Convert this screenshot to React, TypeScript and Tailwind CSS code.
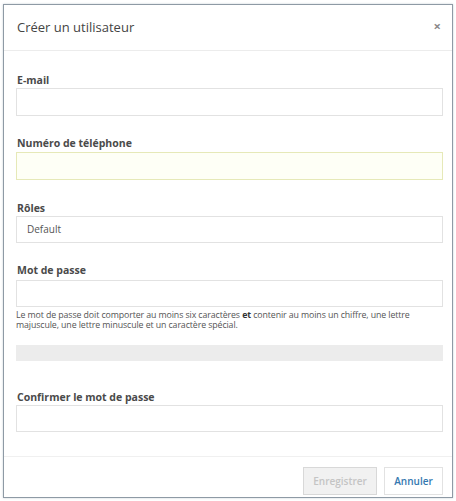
import React from "react";

const font = { fontFamily: '"Open Sans", "Noto Sans", sans-serif' };

function Label({ children, className = "" }: { children: React.ReactNode; className?: string }) {
  return (
    <div className={`text-[10.5px] leading-[14px] font-bold text-[#4a4a4a] ${className}`}>{children}</div>
  );
}

export default function App() {
  return (
    <div className="w-[456px] h-[501px] bg-white pt-[4px] pl-[3px] pr-[3px]" style={font}>
      <div className="h-[494px] border border-[#8e9aa5] flex flex-col bg-white shadow-[0_0_2px_rgba(120,140,160,0.4)]">
        <div className="h-[46px] shrink-0 border-b border-[#ececec] flex items-center justify-between pl-[13px] pr-[11px]">
          <div className="text-[13px] text-[#444] mt-[1px]">Créer un utilisateur</div>
          <div className="text-[13px] font-bold text-[#8a8a8a] leading-none -mt-[3px]">×</div>
        </div>
        <div className="flex-1 flex flex-col pl-[12px] pr-[9px] pt-[22px]">
          <Label className="pl-[1px]">E-mail</Label>
          <div className="mt-[1px] h-[28px] border border-[#e2e2e2] bg-white" />

          <Label className="mt-[20px] pl-[1px]">Numéro de téléphone</Label>
          <div className="mt-[2px] h-[28px] border border-[#e6e9b8] bg-[#fefff6]" />

          <Label className="mt-[21px] pl-[1px]">Rôles</Label>
          <div className="mt-[1px] h-[27px] border border-[#e2e2e2] bg-white flex items-center pl-[10px] text-[10px] text-[#555]">
            Default
          </div>

          <Label className="mt-[20px] pl-[1px]">Mot de passe</Label>
          <div className="mt-[3px] h-[27px] border border-[#e2e2e2] bg-white" />
          <div className="mt-[3px] text-[8.8px] leading-[10px] text-[#555] w-[408px] tracking-[-0.1px]">
            Le mot de passe doit comporter au moins six caractères <span className="font-bold text-[#333]">et</span> contenir au moins un chiffre, une lettre majuscule, une lettre minuscule et un caractère spécial.
          </div>
          <div className="mt-[15px] h-[16px] bg-[#ececec]" />

          <Label className="mt-[29px] pl-[1px]">Confirmer le mot de passe</Label>
          <div className="mt-[1px] h-[27px] border border-[#e2e2e2] bg-white" />
        </div>
        <div className="h-[41px] shrink-0 border-t border-[#f0f0f0] flex items-start justify-end gap-[7px] pt-[10px] pr-[9px]">
          <div className="w-[74px] h-[28px] border border-[#d8d8d8] bg-[#f1f1f1] flex items-center justify-center text-[10px] font-semibold text-[#c4c4c4]">
            Enregistrer
          </div>
          <div className="w-[59px] h-[28px] border border-[#e2e2e2] bg-white flex items-center justify-center text-[10px] font-semibold text-[#3478b0]">
            Annuler
          </div>
        </div>
      </div>
    </div>
  );
}
